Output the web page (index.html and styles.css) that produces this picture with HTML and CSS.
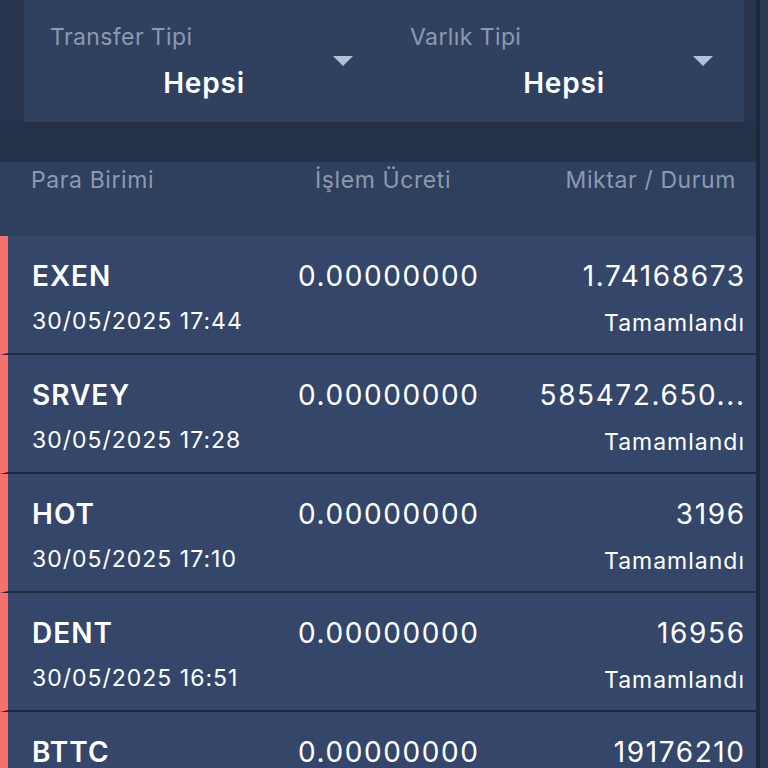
FILE: index.html
```html
<!DOCTYPE html>
<html lang="tr">
<head>
    <meta charset="UTF-8">
    <title>Transfer Geçmişi</title>
    <link rel="stylesheet" href="styles.css">
</head>
<body>
    <div class="page">
        <div class="main">
            <!-- filtreler -->
            <div class="filters">
                <div class="filter">
                    <div class="filter-label">Transfer Tipi</div>
                    <div class="filter-value">Hepsi</div>
                    <span class="caret"></span>
                </div>
                <div class="filter">
                    <div class="filter-label">Varlık Tipi</div>
                    <div class="filter-value">Hepsi</div>
                    <span class="caret"></span>
                </div>
            </div>
            <div class="gap"></div>
            <div class="head">
                <span>Para Birimi</span>
                <span>İşlem Ücreti</span>
                <span class="right">Miktar / Durum</span>
            </div>
            <ul class="list">
                <li class="row">
                    <div class="cell">
                        <div class="coin">EXEN</div>
                        <div class="date">30/05/2025 17:44</div>
                    </div>
                    <div class="fee">0.00000000</div>
                    <div class="cell right">
                        <div class="amount">1.74168673</div>
                        <div class="status">Tamamlandı</div>
                    </div>
                </li>
                <li class="row">
                    <div class="cell">
                        <div class="coin">SRVEY</div>
                        <div class="date">30/05/2025 17:28</div>
                    </div>
                    <div class="fee">0.00000000</div>
                    <div class="cell right">
                        <div class="amount">585472.650...</div>
                        <div class="status">Tamamlandı</div>
                    </div>
                </li>
                <li class="row">
                    <div class="cell">
                        <div class="coin">HOT</div>
                        <div class="date">30/05/2025 17:10</div>
                    </div>
                    <div class="fee">0.00000000</div>
                    <div class="cell right">
                        <div class="amount">3196</div>
                        <div class="status">Tamamlandı</div>
                    </div>
                </li>
                <li class="row">
                    <div class="cell">
                        <div class="coin">DENT</div>
                        <div class="date">30/05/2025 16:51</div>
                    </div>
                    <div class="fee">0.00000000</div>
                    <div class="cell right">
                        <div class="amount">16956</div>
                        <div class="status">Tamamlandı</div>
                    </div>
                </li>
                <li class="row">
                    <div class="cell">
                        <div class="coin">BTTC</div>
                    </div>
                    <div class="fee">0.00000000</div>
                    <div class="cell right">
                        <div class="amount">19176210</div>
                    </div>
                </li>
            </ul>
        </div>
        <div class="edge"></div>
    </div>
</body>
</html>
```

FILE: styles.css
```css
*{
    margin: 0;
    padding: 0;
}
body{
    background-color: #28344d;
    font-family: Inter, "Noto Sans", "Liberation Sans", sans-serif;
    color: #ffffff;
    height: 768px;
    overflow: hidden;
}
.page{
    display: flex;
    height: 768px;
}
.main{
    width: 756px;
}
.edge{
    flex: 1;
    border-left: 4px solid #1e283b;
    background-color: #2b3853;
}
.filters{
    display: flex;
    margin: 0 12px 0 24px;
    height: 122px;
    background-color: #30415f;
    box-shadow: 0 1px 2px rgba(0,0,0,0.15);
}
.filter{
    flex: 1;
    position: relative;
    padding: 22px 0 0 26px;
}
.filter-label{
    font-size: 23px;
    color: #8c99b1;
    line-height: 30px;
    letter-spacing: 0.4px;
}
.filter-value{
    font-size: 28px;
    font-weight: 600;
    text-align: center;
    line-height: 34px;
    letter-spacing: 0.8px;
    margin: 14px 0 0 -26px;
}
.caret{
    position: absolute;
    right: 31px;
    top: 56px;
    width: 0;
    height: 0;
    border-left: 10px solid transparent;
    border-right: 10px solid transparent;
    border-top: 10px solid #b3c0da;
}
.gap{
    height: 40px;
    background-color: #26324a;
}
.head{
    display: grid;
    grid-template-columns: 284px 1fr auto;
    height: 74px;
    padding: 3px 20px 0 31px;
    box-sizing: border-box;
    background-color: #2f405e;
    font-size: 23px;
    line-height: 30px;
    letter-spacing: 0.6px;
    color: #8c99b1;
}
.right{
    text-align: right;
}
.list{
    list-style: none;
}
.row{
    display: grid;
    grid-template-columns: 266px 1fr auto;
    height: 119px;
    padding: 22px 12px 0 24px;
    box-sizing: border-box;
    border-left: 8px solid #f5716b;
    border-bottom: 2px solid #1f2a3f;
    background-color: #34476a;
}
.coin{
    font-size: 28px;
    font-weight: 600;
    line-height: 36px;
    letter-spacing: 1px;
}
.date{
    font-size: 23px;
    line-height: 30px;
    letter-spacing: 1px;
    margin-top: 12px;
}
.fee, .amount{
    font-size: 28px;
    line-height: 36px;
    letter-spacing: 1.6px;
}
.amount{
    margin-right: -1.6px;
}
.status{
    font-size: 23px;
    line-height: 30px;
    letter-spacing: 1px;
    margin: 14px -1px 0 0;
}
```
